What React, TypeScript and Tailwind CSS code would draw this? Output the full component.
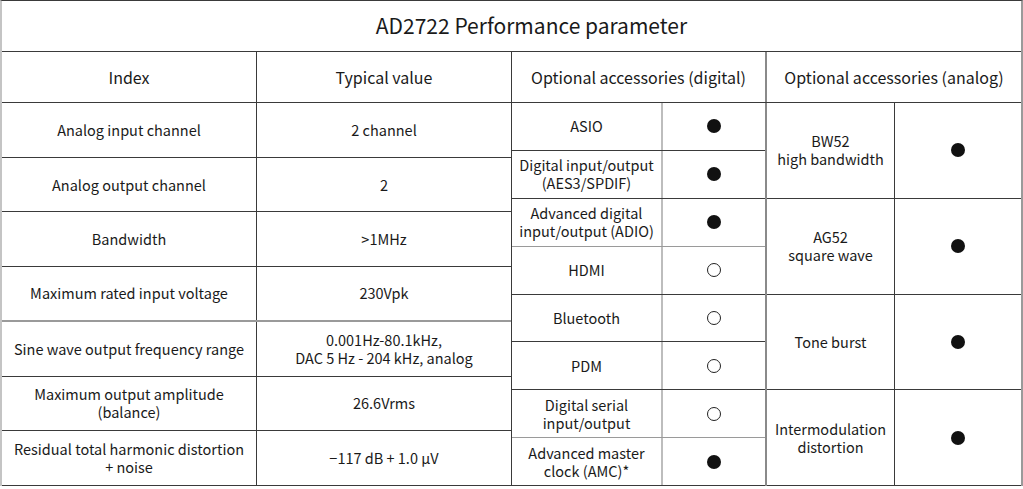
import React from "react";

const font = { fontFamily: '"Noto Sans CJK SC", "Noto Sans", sans-serif' };

function Dot({ filled }: { filled: boolean }) {
  return filled ? (
    <span className="block w-[14px] h-[14px] rounded-full bg-[#111]" />
  ) : (
    <span className="block w-[14px] h-[14px] rounded-full border border-[#222] bg-white" />
  );
}

const leftRows: [string, string][] = [
  ["Analog input channel", "2 channel"],
  ["Analog output channel", "2"],
  ["Bandwidth", ">1MHz"],
  ["Maximum rated input voltage", "230Vpk"],
  ["Sine wave output frequency range", "0.001Hz-80.1kHz,\nDAC 5 Hz - 204 kHz, analog"],
  ["Maximum output amplitude\n(balance)", "26.6Vrms"],
  ["Residual total harmonic distortion\n+ noise", "\u2212117 dB + 1.0 \u00b5V"],
];

const digital: [string, boolean][] = [
  ["ASIO", true],
  ["Digital input/output\n(AES3/SPDIF)", true],
  ["Advanced digital\ninput/output (ADIO)", true],
  ["HDMI", false],
  ["Bluetooth", false],
  ["PDM", false],
  ["Digital serial\ninput/output", false],
  ["Advanced master\nclock (AMC)*", true],
];

const analog: [string, boolean][] = [
  ["BW52\nhigh bandwidth", true],
  ["AG52\nsquare wave", true],
  ["Tone burst", true],
  ["Intermodulation\ndistortion", true],
];

function Txt({ t }: { t: string }) {
  return (
    <div className="text-center whitespace-pre-line text-[14.5px] leading-[18px] text-[#1a1a1a]">{t}</div>
  );
}

export default function App() {
  return (
    <div className="w-[1023px] h-[489px] bg-white" style={font}>
      <div className="w-[1023px] border-t border-t-[#3a3a3a] border-l-2 border-l-[#c4c4c4] border-r-2 border-r-[#9a9a9a]">
        <div className="h-[51px] flex items-center justify-center pl-[40px] border-b border-[#3a3a3a] text-[21px] text-[#1a1a1a]">
          AD2722 Performance parameter
        </div>
        <div className="h-[51px] flex border-b border-[#3a3a3a] text-[16px] text-[#1a1a1a]">
          <div className="w-[255px] flex items-center justify-center border-r border-[#3a3a3a]">Index</div>
          <div className="w-[255px] flex items-center justify-center border-r border-[#3a3a3a]">Typical value</div>
          <div className="w-[255px] flex items-center justify-center border-r-2 border-[#8a8a8a]">Optional accessories (digital)</div>
          <div className="flex-1 flex items-center justify-center">Optional accessories (analog)</div>
        </div>
        <div className="h-[383px] flex">
          <div className="w-[510px] grid grid-rows-7 border-r border-[#3a3a3a]">
            {leftRows.map(([a, b], i) => (
              <div key={i} className={`flex ${i === 3 ? "border-b-2 border-[#9a9a9a]" : "border-b border-[#3a3a3a]"}`}>
                <div className="w-[255px] flex items-center justify-center border-r border-[#3a3a3a]"><Txt t={a} /></div>
                <div className="flex-1 flex items-center justify-center"><Txt t={b} /></div>
              </div>
            ))}
          </div>
          <div className="w-[255px] grid grid-rows-8 border-r-2 border-[#8a8a8a]">
            {digital.map(([t, f], i) => (
              <div key={i} className={`flex border-b ${i === 6 || i === 2 ? "border-[#9a9a9a]" : "border-[#3a3a3a]"}`}>
                <div className="w-[151px] flex items-center justify-center border-r-2 border-[#bdbdbd]"><Txt t={t} /></div>
                <div className="flex-1 flex items-center justify-center"><Dot filled={f} /></div>
              </div>
            ))}
          </div>
          <div className="flex-1 grid grid-rows-4">
            {analog.map(([t, f], i) => (
              <div key={i} className="flex border-b border-[#3a3a3a]">
                <div className="w-[128px] flex items-center justify-center border-r border-[#3a3a3a]"><Txt t={t} /></div>
                <div className="flex-1 flex items-center justify-center"><Dot filled={f} /></div>
              </div>
            ))}
          </div>
        </div>
      </div>
    </div>
  );
}
